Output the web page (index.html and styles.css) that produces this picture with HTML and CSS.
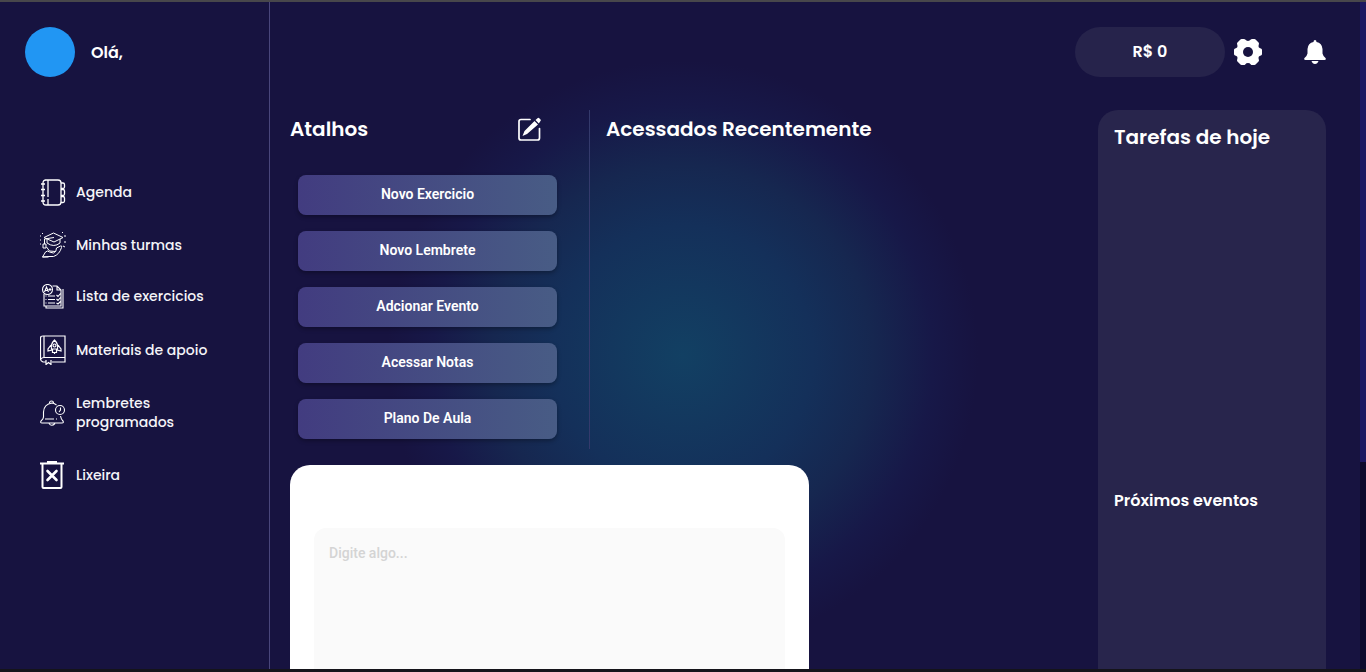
FILE: index.html
```html
<!DOCTYPE html>
<html lang="pt-BR">
<head>
<meta charset="utf-8">
<meta name="viewport" content="width=device-width, initial-scale=1">
<title>Início</title>
<link rel="stylesheet" href="styles.css">
</head>
<body>
<div class="app">
  <aside class="sidebar">
    <div class="profile">
      <span class="avatar"></span>
      <span class="greeting">Olá,</span>
    </div>
    <nav class="nav">
      <a class="nav-link" href="#agenda">
        <svg class="icon" width="26" height="27" viewBox="0 0 26 27" fill="none" stroke="#fff" stroke-width="1.3"><path d="M5 1h13q3 0 3 3v19q0 3-3 3H6q-3 0-3-3V4q0-3 3-3zM8 1v17m0 2v6M21 4h2q1.500 0 1.500 1.500V8q0 1.500-1.500 1.500h-2m0 1h2q1.500 0 1.500 1.500v3q0 1.500-1.500 1.500h-2m0 1h2q1.500 0 1.500 1.500v3q0 1.500-1.500 1.500h-2M1 5h4M1 10.500h4M1 16.500h4M1 22h4"/></svg>
        <span>Agenda</span>
      </a>
      <a class="nav-link" href="#turmas">
        <svg class="icon" width="26" height="26" viewBox="0 0 26 26" fill="none" stroke="#fff" stroke-width="1" stroke-linejoin="round"><path d="M4 5.500 13.500 1 23 5.500 14 10zM7 7v4q7 5 13 0V7M14 5.500 4.500 7v5M3 12h3v4H3zM2.500 25l3-5q2-2 4 0l4 1q3-1 3-5l4-2q2-.5 1 1.500-2 7-8 9H9zM6.500 15l3 4 6 .5M2.500 25h6M0 4h1M2 1l1 1M0 8h1M0 12h1M24 4h2M22 1l1-1M24 10h2M23 14l2 1"/></svg>
        <span>Minhas turmas</span>
      </a>
      <a class="nav-link" href="#exercicios">
        <svg class="icon" width="26" height="25" viewBox="0 0 26 25" fill="none" stroke="#fff" stroke-width="1.100"><circle cx="7.500" cy="5.500" r="5"/><path d="m4.500 8 2-5 2 5M5 6.500h3M8.500 5.500h3M10 4v3M12.500 2H17l4 4v16H4V10M17 2v4h4M23 5v19H6v-2M8 12h7M8 15.500h7M8 19h7M16.500 11l1.500 1.500 2.500-3M16.500 15l1.500 1.500 2.500-3M16.500 19l1.500 1 2.500-2.500M5.500 12h1M5.500 15.500h1M5.500 19h1"/></svg>
        <span>Lista de exercicios</span>
      </a>
      <a class="nav-link" href="#materiais">
        <svg class="icon" width="26" height="30" viewBox="0 0 26 30" fill="none" stroke="#fff" stroke-width="1.200"><path d="M3 1h22v26H12M6 27H3q-2.500-1-2.500-3V3Q.5 1 3 1M4 1v21M1 24q1-1.500 3-1.500h21M6 25v4.500l2.500-2 2.500 2V25"/><path d="M14.500 5q4 4 3 9h-6q-1-5 3-9zM11 10l-3 4v2l4-1M18 10l3 4v2l-4-1M12.500 14v3.500h4V14M14.500 17v2"/><circle cx="14.500" cy="10.500" r="1.500"/></svg>
        <span>Materiais de apoio</span>
      </a>
      <a class="nav-link two-line" href="#lembretes">
        <svg class="icon" width="26" height="26" viewBox="0 0 26 26" fill="none" stroke="#fff" stroke-width="1.100"><path d="M16.500 5Q14 3 12 3 4 4 3.500 12v5q0 2-2.500 4-1 2 1 2h20q2 0 1-2-2-2-2.500-5M9.500 3q0-2 2-2t2 2M9 23.500q2.500 3.500 6 0M5 19h9m2 0h1"/><circle cx="20" cy="10" r="4.500"/><path d="M20.500 7.500V10l-1.500 2"/></svg>
        <span>Lembretes programados</span>
      </a>
      <a class="nav-link" href="#lixeira">
        <svg class="icon" width="26" height="28" viewBox="0 0 26 28" fill="none" stroke="#fff"><path stroke-width="2" d="M0 2.500h24M2.500 3v23q0 1 1 1h17q1 0 1-1V3"/><path stroke-width="2" d="M7 1h10"/><path stroke-width="2.600" stroke-linecap="round" d="m7.500 10 9 9m0-9-9 9"/></svg>
        <span>Lixeira</span>
      </a>
    </nav>
  </aside>

  <main class="main">
    <header class="topbar">
      <span class="balance">R$ 0</span>
      <button class="icon-button" type="button" aria-label="Configurações">
        <svg width="28" height="28" viewBox="0 0 28 28"><path fill="#fff" stroke="#fff" stroke-width="3" stroke-linejoin="round" d="M7.500 2.500h2.500q1.500 2 4 2t4-2h2.500l3 3q-1 3 0 4.500t3 2v4q-2 .5-3 2t0 4.500l-3 3H18q-1.500-2-4-2t-4 2H7.500l-3-3q1-3 0-4.500t-3-2v-4q2-.5 3-2t0-4.500z"/><circle cx="14" cy="14" r="5" fill="#171340"/></svg>
      </button>
      <button class="icon-button alerts" type="button" aria-label="Notificações">
        <svg width="22" height="24" viewBox="0 0 22 24" fill="#fff"><path d="M11 0q1.500 0 1.500 2Q18 3 18.500 9v4.500Q19 16 21.500 18q1 2-1 2h-19q-2 0-1-2Q3 16 3.500 13.500V9Q4 3 9.500 2 9.500 0 11 0zM7.500 21h7q-1 3-3.500 3t-3.500-3z"/></svg>
      </button>
    </header>

    <div class="content">
      <div class="workspace">
        <section class="shortcuts">
          <div class="section-head">
            <h2 class="title">Atalhos</h2>
            <button class="icon-button" type="button" aria-label="Editar atalhos">
              <svg width="24" height="24" viewBox="0 0 24 24" fill="none" stroke="#fff"><path stroke-width="1.700" stroke-linecap="round" d="M13 2.500H4q-2 0-2 2V21q0 2 2 2h16.500q2 0 2-2V11.500"/><path fill="#fff" stroke="none" d="m17.500 4 3.500 3.500L10 17 5.500 19 7.500 14zM18.500 3 20.500 1.300q1-1 2 .2l.8.800q1 1 0 2L21.800 6.500z"/></svg>
            </button>
          </div>
          <div class="shortcut-list">
            <button class="shortcut" type="button">Novo Exercicio</button>
            <button class="shortcut" type="button">Novo Lembrete</button>
            <button class="shortcut" type="button">Adcionar Evento</button>
            <button class="shortcut" type="button">Acessar Notas</button>
            <button class="shortcut" type="button">Plano De Aula</button>
          </div>
        </section>
        <section class="recent">
          <h2 class="title">Acessados Recentemente</h2>
        </section>
        <section class="editor">
          <textarea class="note" aria-label="Anotação" placeholder="Digite algo..."></textarea>
        </section>
      </div>
      <aside class="agenda">
        <section><h2 class="title">Tarefas de hoje</h2></section>
        <section><h3 class="subtitle">Próximos eventos</h3></section>
      </aside>
    </div>
  </main>
  <div class="scroll-track"><div class="scroll-thumb"></div></div>
</div>
</body>
</html>
```
FILE: styles.css
```css
* { box-sizing: border-box; }
body {
  margin: 0;
  overflow: hidden;
  background: #15141a;
  color: #fff;
  font-family: Poppins, Inter, sans-serif;
}
h2, h3 { margin: 0; font-weight: 600; }
button { font: inherit; color: inherit; border: 0; cursor: pointer; }

.app {
  display: flex;
  height: calc(100vh - 3px);
  overflow: hidden;
  border-top: 2px solid #48474b;
  background: radial-gradient(circle at 50% 53%, #124063 0, #14305a 130px, #162750 190px, #171848 250px, #171340 295px);
}

.sidebar {
  flex: 0 0 270px;
  padding: 25px;
  border-right: 1px solid #49467b;
}
.profile { display: flex; align-items: center; gap: 16px; }
.avatar { width: 50px; height: 50px; border-radius: 50%; background: #2196f3; }
.greeting { font-size: 16px; font-weight: 600; }
.nav {
  display: flex;
  flex-direction: column;
  gap: 26px;
  padding: 102px 15px 0;
}
.nav-link {
  display: flex;
  align-items: center;
  gap: 10px;
  color: #f4f4f8;
  font-size: 14px;
  font-weight: 500;
  line-height: 19px;
  text-decoration: none;
}
.two-line { padding: 3px 0; }
.icon { flex: none; }

.main {
  flex: 1;
  min-width: 0;
  display: flex;
  flex-direction: column;
  padding: 25px 34px 0 20px;
}
.topbar { display: flex; align-items: center; justify-content: flex-end; gap: 9px; }
.balance {
  width: 150px;
  height: 50px;
  border-radius: 25px;
  background: #26234b;
  text-align: center;
  line-height: 50px;
  font-weight: 600;
}
.icon-button { display: flex; padding: 0; background: none; }
.alerts { margin-left: 33px; }

.content {
  flex: 1;
  min-height: 0;
  display: grid;
  grid-template-columns: minmax(0, 1fr) 228px;
  gap: 16px;
  margin-top: 33px;
}
.workspace {
  display: grid;
  grid-template-columns: 300px minmax(0, 1fr);
  grid-template-rows: auto minmax(0, 1fr);
  row-gap: 16px;
  min-height: 0;
}
.title { font-size: 20px; line-height: 38px; }
.shortcuts { border-right: 1px solid #343a6c; padding-bottom: 10px; }
.section-head {
  display: flex;
  align-items: center;
  justify-content: space-between;
  padding-right: 48px;
}
.shortcut-list {
  display: flex;
  flex-direction: column;
  gap: 16px;
  padding: 27px 32px 0 8px;
}
.shortcut {
  height: 40px;
  padding-bottom: 3px;
  border-radius: 8px;
  background: linear-gradient(90deg, #423c80, #485c85);
  box-shadow: 0 2px 4px rgba(0, 0, 0, 0.3);
  font-family: Roboto, sans-serif;
  font-size: 14px;
  font-weight: 600;
}
.recent { padding-left: 16px; }
.editor {
  grid-column: 1 / -1;
  display: flex;
  width: 100%;
  max-width: 519px;
  padding: 63px 24px 0;
  border-radius: 20px 20px 0 0;
  background: #fff;
}
.note {
  flex: 1;
  min-width: 0;
  padding: 15px;
  border: 0;
  border-radius: 12px 12px 0 0;
  background: #fafafa;
  resize: none;
  outline: none;
  font: 500 14px/20px Roboto, sans-serif;
}
.note::placeholder { color: #d4d4d4; opacity: 1; }

.agenda {
  display: grid;
  grid-template-rows: 364px auto;
  align-content: start;
  padding: 8px 16px;
  border-radius: 20px 20px 0 0;
  background: #28254c;
}
.subtitle { font-size: 16px; line-height: 38px; }

.scroll-track { flex: 0 0 6px; background: #0d0b2d; }
.scroll-thumb { height: 69%; background: #1c1862; }
```
